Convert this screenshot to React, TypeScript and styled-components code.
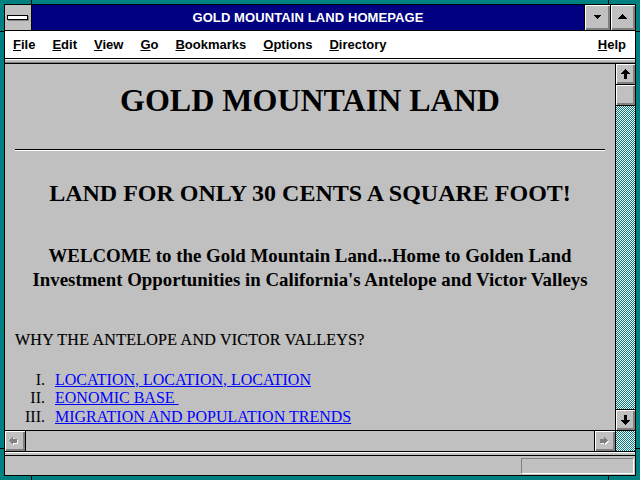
import React from "react";
import styled, { createGlobalStyle } from "styled-components";

const Global = createGlobalStyle`
  html, body { margin: 0; padding: 0; background: #008080; }
  body { width: 640px; height: 480px; overflow: hidden; }
  * { box-sizing: border-box; }
`;

const SANS = `"Liberation Sans", Arial, sans-serif`;
const SERIF = `"Liberation Serif", "Times New Roman", serif`;

const Frame = styled.div`
  position: relative;
  width: 640px;
  height: 480px;
  background: #008080;
  padding: 4px;
`;

const VMark = styled.span<{ $x: number; $bottom?: boolean }>`
  position: absolute;
  left: ${(p) => p.$x}px;
  ${(p) => (p.$bottom ? "bottom: 0;" : "top: 0;")}
  width: 1px;
  height: 4px;
  background: #000;
`;

const HMark = styled.span<{ $y: number; $right?: boolean }>`
  position: absolute;
  top: ${(p) => p.$y}px;
  ${(p) => (p.$right ? "right: 0;" : "left: 0;")}
  width: 4px;
  height: 1px;
  background: #000;
`;

const Window = styled.div`
  display: flex;
  flex-direction: column;
  width: 632px;
  height: 472px;
  border: 1px solid #000;
  background: #c0c0c0;
`;

const TitleBar = styled.div`
  display: flex;
  height: 26px;
  border-bottom: 1px solid #000;
  flex: none;
`;

const SysBox = styled.div`
  width: 27px;
  border-right: 1px solid #000;
  background: #c0c0c0;
  display: flex;
  align-items: center;
  justify-content: center;
  padding-bottom: 1px;
`;

const SysBar = styled.div`
  width: 21px;
  height: 5px;
  border: 1px solid #000;
  background: #fff;
  box-shadow: 1px 1px 0 #808080;
  margin-right: 1px;
`;

const Caption = styled.div`
  flex: 1;
  background: #000080;
  color: #fff;
  font: 700 13px/25px ${SANS};
  letter-spacing: 0.1px;
  text-align: center;
  white-space: nowrap;
`;

const TitleButton = styled.div<{ $w: number }>`
  width: ${(p) => p.$w}px;
  border-left: 1px solid #000;
  background: #c0c0c0;
  display: flex;
  align-items: center;
  justify-content: center;
  padding: 0 1px 2px 0;
  box-shadow: inset 1px 1px 0 #fff, inset -1px -1px 0 #808080,
    inset -2px -2px 0 #808080;
`;

const MenuBar = styled.div`
  display: flex;
  align-items: center;
  gap: 17px;
  height: 28px;
  padding: 0 9px 1px 8px;
  background: #fff;
  border-bottom: 1px solid #000;
  flex: none;
  font: 700 13px/1 ${SANS};
  color: #000;
`;

const MenuItem = styled.span<{ $end?: boolean }>`
  white-space: nowrap;
  ${(p) => (p.$end ? "margin-left: auto;" : "")}
`;

const Strip = styled.div`
  height: 3px;
  flex: none;
  border-top: 1px solid #fff;
  background: #c0c0c0;
`;

const Main = styled.div`
  display: flex;
  height: 368px;
  flex: none;
  border-top: 1px solid #808080;
  padding-top: 1px;
  background: #000;
`;

const Content = styled.div`
  flex: 1;
  background: #c0c0c0;
  padding: 0 10px;
  overflow: hidden;
  color: #000;
  font-family: ${SERIF};
`;

const H1 = styled.h1`
  margin: 18px 0 0;
  font: 700 32px/36px ${SERIF};
  text-align: center;
`;

const Rule = styled.hr`
  margin: 31px 0 0;
  height: 0;
  border: 0;
  border-top: 1px solid #000;
  border-bottom: 1px solid #fff;
`;

const H2 = styled.h2`
  margin: 28px 0 0;
  font: 700 24px/28px ${SERIF};
  text-align: center;
`;

const H3 = styled.h3`
  margin: 37px 0 0;
  font: 700 18.85px/24px ${SERIF};
  text-align: center;
`;

const Lead = styled.p`
  margin: 39px 0 0;
  font: 400 16px/18.5px ${SERIF};
  letter-spacing: 0.25px;
  -webkit-text-stroke: 0.2px #000;
`;

const List = styled.ol`
  margin: 21px 0 0;
  padding: 0;
  list-style: none;
`;

const Item = styled.li`
  display: grid;
  grid-template-columns: 30px 1fr;
  column-gap: 10px;
  font: 400 16px/18.5px ${SERIF};
`;

const Numeral = styled.span`
  text-align: right;
`;

const Link = styled.a`
  color: #0000ff;
  text-decoration: underline;
  justify-self: start;
`;

const VScroll = styled.div`
  width: 20px;
  display: flex;
  flex-direction: column;
  border-left: 1px solid #000;
  background: #000;
`;

const ScrollButton = styled.div<{ $edge: "top" | "bottom" }>`
  flex: none;
  height: 21px;
  ${(p) =>
    p.$edge === "bottom"
      ? "border-bottom: 1px solid #000;"
      : "border-top: 1px solid #000;"}
  background: #c0c0c0;
  display: flex;
  align-items: center;
  justify-content: center;
  padding: 0 1px 1px 0;
  box-shadow: inset 1px 1px 0 #fff, inset -1px -1px 0 #808080,
    inset -2px -2px 0 #808080;
`;

const Track = styled.div`
  flex: 1;
  background-color: #fff;
  background-image: repeating-conic-gradient(#008080 0 25%, #fff 0 50%);
  background-size: 2px 2px;
`;

const HScroll = styled.div`
  display: flex;
  height: 22px;
  flex: none;
  border-top: 1px solid #000;
  border-bottom: 1px solid #000;
`;

const HButton = styled.div<{ $side: "left" | "right" }>`
  flex: none;
  width: ${(p) => (p.$side === "left" ? 21 : 22)}px;
  ${(p) =>
    p.$side === "left"
      ? "border-right: 1px solid #000;"
      : "border-left: 1px solid #000; border-right: 1px solid #000;"}
  background: #c0c0c0;
  display: flex;
  align-items: center;
  justify-content: center;
  padding: 0 1px 1px 0;
  box-shadow: inset 1px 1px 0 #fff, inset -1px -1px 0 #808080,
    inset -2px -2px 0 #808080;
`;

const HTrack = styled.div`
  flex: 1;
  background: #c0c0c0;
`;

const Corner = styled(Track)`
  flex: none;
  width: 19px;
`;

const Separator = styled.div`
  height: 4px;
  flex: none;
  border-top: 1px solid #fff;
  border-bottom: 1px solid #000;
  background: #c0c0c0;
`;

const StatusBar = styled.div`
  flex: 1;
  display: flex;
  justify-content: flex-end;
  align-items: flex-start;
  padding: 2px 1px 0 0;
  background: #c0c0c0;
`;

const StatusBox = styled.div`
  width: 113px;
  height: 16px;
  border-top: 1px solid #808080;
  border-left: 1px solid #808080;
  border-bottom: 1px solid #fff;
  border-right: 1px solid #fff;
`;

const Svg = styled.svg`
  display: block;
  shape-rendering: crispEdges;
`;

const TriDown = () => (
  <Svg width="7" height="4" viewBox="0 0 7 4">
    <polygon points="0,0 7,0 3.5,4" fill="#000" />
  </Svg>
);

const TriUp = () => (
  <Svg width="9" height="5" viewBox="0 0 9 5">
    <polygon points="0,5 9,5 4.5,0" fill="#000" />
  </Svg>
);

const ArrowUp = () => (
  <Svg width="9" height="10" viewBox="0 0 9 10">
    <polygon points="4.5,0 9,5 6,5 6,10 3,10 3,5 0,5" fill="#000" />
  </Svg>
);

const ArrowDown = () => (
  <Svg width="9" height="10" viewBox="0 0 9 10">
    <polygon points="4.5,10 9,5 6,5 6,0 3,0 3,5 0,5" fill="#000" />
  </Svg>
);

const ArrowLeftDim = () => (
  <Svg width="11" height="10" viewBox="0 0 11 10">
    <polygon points="1,5.5 5,1.5 5,3.5 9,3.5 9,7.5 5,7.5 5,9.5" fill="#fff" />
    <polygon points="0,4.5 4,0.5 4,2.5 8,2.5 8,6.5 4,6.5 4,8.5" fill="#808080" />
  </Svg>
);

const ArrowRightDim = () => (
  <Svg width="11" height="10" viewBox="0 0 11 10">
    <polygon points="10,5.5 6,1.5 6,3.5 2,3.5 2,7.5 6,7.5 6,9.5" fill="#fff" />
    <polygon points="9,4.5 5,0.5 5,2.5 1,2.5 1,6.5 5,6.5 5,8.5" fill="#808080" />
  </Svg>
);

const menus: { key: string; rest: string; end?: boolean }[] = [
  { key: "F", rest: "ile" },
  { key: "E", rest: "dit" },
  { key: "V", rest: "iew" },
  { key: "G", rest: "o" },
  { key: "B", rest: "ookmarks" },
  { key: "O", rest: "ptions" },
  { key: "D", rest: "irectory" },
  { key: "H", rest: "elp", end: true },
];

const links = [
  { n: "I.", text: "LOCATION, LOCATION, LOCATION" },
  { n: "II.", text: "EONOMIC BASE\u00a0" },
  { n: "III.", text: "MIGRATION AND POPULATION TRENDS" },
];

export default function App() {
  return (
    <>
      <Global />
      <Frame>
        <VMark $x={31} />
        <VMark $x={608} />
        <VMark $x={31} $bottom />
        <VMark $x={608} $bottom />
        <HMark $y={31} />
        <HMark $y={448} />
        <HMark $y={31} $right />
        <HMark $y={448} $right />
        <Window>
          <TitleBar>
            <SysBox>
              <SysBar />
            </SysBox>
            <Caption>GOLD MOUNTAIN LAND HOMEPAGE</Caption>
            <TitleButton $w={26}>
              <TriDown />
            </TitleButton>
            <TitleButton $w={25}>
              <TriUp />
            </TitleButton>
          </TitleBar>
          <MenuBar>
            {menus.map((m) => (
              <MenuItem key={m.key} $end={m.end}>
                <u>{m.key}</u>
                {m.rest}
              </MenuItem>
            ))}
          </MenuBar>
          <Strip />
          <Main>
            <Content>
              <H1>GOLD MOUNTAIN LAND</H1>
              <Rule />
              <H2>LAND FOR ONLY 30 CENTS A SQUARE FOOT!</H2>
              <H3>
                WELCOME to the Gold Mountain Land...Home to Golden Land
                <br />
                Investment Opportunities in California's Antelope and Victor Valleys
              </H3>
              <Lead>WHY THE ANTELOPE AND VICTOR VALLEYS?</Lead>
              <List>
                {links.map((l) => (
                  <Item key={l.n}>
                    <Numeral>{l.n}</Numeral>
                    <Link href="#">{l.text}</Link>
                  </Item>
                ))}
              </List>
            </Content>
            <VScroll>
              <ScrollButton $edge="bottom">
                <ArrowUp />
              </ScrollButton>
              <ScrollButton $edge="bottom" />
              <Track />
              <ScrollButton $edge="top">
                <ArrowDown />
              </ScrollButton>
            </VScroll>
          </Main>
          <HScroll>
            <HButton $side="left">
              <ArrowLeftDim />
            </HButton>
            <HTrack />
            <HButton $side="right">
              <ArrowRightDim />
            </HButton>
            <Corner />
          </HScroll>
          <Separator />
          <StatusBar>
            <StatusBox />
          </StatusBar>
        </Window>
      </Frame>
    </>
  );
}
